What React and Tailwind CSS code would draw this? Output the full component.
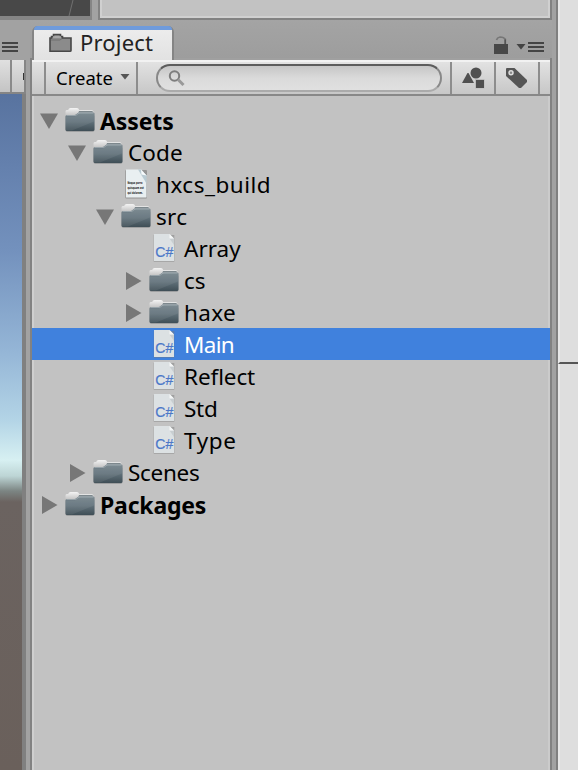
import React from "react";

function Folder() {
  return (
    <svg width="32" height="32" viewBox="0 0 32 32" className="shrink-0">
      <defs>
        <linearGradient id="fb" x1="0" y1="0" x2="0" y2="1">
          <stop offset="0" stopColor="#73828a" />
          <stop offset=".5" stopColor="#61717a" />
          <stop offset="1" stopColor="#3f4e56" />
        </linearGradient>
        <linearGradient id="ft" x1="0" y1="0" x2="0" y2="1">
          <stop offset="0" stopColor="#f4f4f4" />
          <stop offset="1" stopColor="#bcbcbc" />
        </linearGradient>
      </defs>
      <g transform="translate(0 .5)">
        <rect x="1.600" y="10" width="28.800" height="17.500" rx="2" fill="#8e9091" opacity=".7" />
        <path d="M1.500 12V7q0-1.500 1.200-1.500h1.500q.5-2 2.300-2h6.500q1.500 0 2.200 2h12.300q2 0 2 2v4z" fill="url(#ft)" />
        <path d="M15 6.500h12.500q1.500 0 1.500 1.500v2H13z" fill="#a3acb0" />
        <path d="M15 7h13.500" stroke="#7d888d" />
        <path d="M1.500 12q0-1.500 1.500-1.500h7.500q1 0 2-1l1.500-1q.6-.5 1.600-.5H29q1.500 0 1.500 1v16q0 1.500-1.500 1.500H3Q1.500 26.500 1.500 25z" fill="url(#fb)" />
        <path d="M2.500 11h8.500q1 0 2-1l1-.7q1-.8 2-.8h13.500" fill="none" stroke="#a3afb4" strokeWidth=".8" />
        <path d="M2 12h9l4-3.500h15V17L8 26H2z" fill="#fff" opacity=".07" />
      </g>
    </svg>
  );
}

function CSharp() {
  return (
    <svg width="32" height="32" viewBox="0 0 32 32" className="shrink-0">
      <rect x="5.700" y="3" width="20.600" height="26.800" fill="#777" opacity=".45" />
      <path d="M6 2h15.500l4.500 4.500V29H6z" fill="#dce1e3" />
      <path d="M21.500 6.500H26V13z" fill="#c8ced1" />
      <path d="M21.500 2v4.500H26z" fill="#f5f7f7" />
      <text x="7.300" y="25" fontSize="15" textLength="18" lengthAdjust="spacingAndGlyphs" fill="#4c78c8" stroke="#4c78c8" strokeWidth=".2" className="font-['Liberation_Sans',sans-serif]">C#</text>
    </svg>
  );
}

function TextFile() {
  return (
    <svg width="32" height="32" viewBox="0 0 32 32" className="shrink-0">
      <rect x="5.300" y="2" width="21.700" height="28.500" rx="1" fill="#777" opacity=".6" />
      <path d="M6 1.500h15l5.500 6v22H6z" fill="#e9eff1" />
      <path d="M18 1.500h3l5.500 6v8z" fill="#b9cbd3" />
      <path d="M21 1.500l5.500 6-5-1z" fill="#f8fbfc" />
      <g className="font-['DejaVu_Sans',sans-serif] font-bold" fill="#222" fontSize="3.700">
        <text transform="translate(7.5 16.3) scale(.58 1)">Neque porro</text>
        <text transform="translate(7.5 21) scale(.58 1)">quisquam est</text>
        <text transform="translate(7.5 25.7) scale(.58 1)">qui dolorem.</text>
      </g>
    </svg>
  );
}

function Arrow({ open }) {
  return (
    <svg width="18" height="20" viewBox="0 0 18 20" className="shrink-0">
      <path d={open ? "M0 3.500h18L9 19z" : "M2 2v18L17.500 11z"} fill="#777" />
    </svg>
  );
}

const icons = { folder: Folder, cs: CSharp, text: TextFile };

const rows = [
  { label: "Assets", icon: "folder", open: true, pad: "pl-[6px]", style: "font-bold text-[23px] tracking-[-0.1px]" },
  { label: "Code", icon: "folder", open: true, pad: "pl-[34px]", style: "tracking-[0.1px]" },
  { label: "hxcs_build", icon: "text", pad: "pl-[62px]", style: "tracking-[0.5px]" },
  { label: "src", icon: "folder", open: true, pad: "pl-[62px]", style: "tracking-[0.3px]" },
  { label: "Array", icon: "cs", pad: "pl-[90px]", style: "tracking-[0px]" },
  { label: "cs", icon: "folder", open: false, pad: "pl-[90px]", style: "tracking-[0px]" },
  { label: "haxe", icon: "folder", open: false, pad: "pl-[90px]", style: "tracking-[0.3px]" },
  { label: "Main", icon: "cs", pad: "pl-[92px]", style: "tracking-[-0.7px]", selected: true },
  { label: "Reflect", icon: "cs", pad: "pl-[90px]", style: "tracking-[-0.1px]" },
  { label: "Std", icon: "cs", pad: "pl-[90px]", style: "tracking-[-0.3px]" },
  { label: "Type", icon: "cs", pad: "pl-[90px]", style: "tracking-[0.6px]" },
  { label: "Scenes", icon: "folder", open: false, pad: "pl-[34px]", style: "tracking-[-0.3px]" },
  { label: "Packages", icon: "folder", open: false, pad: "pl-[6px]", style: "font-bold text-[23px] tracking-[-0.2px]" },
];

function Row({ row }) {
  const Icon = icons[row.icon];
  const bg = row.selected ? "bg-[#4081dd] text-white -mx-[2px]" : "text-black";
  return (
    <div className={`flex h-8 items-center ${row.pad} ${bg}`}>
      <div className="flex w-[24px] shrink-0 items-center">
        {row.open !== undefined && <Arrow open={row.open} />}
      </div>
      <Icon />
      <span className={`ml-[4px] whitespace-nowrap pt-[2px] leading-[30px] ${row.style}`}>{row.label}</span>
    </div>
  );
}

function Menu() {
  return (
    <div className="flex h-[10px] w-[16px] flex-col justify-between">
      <div className="h-[2px] bg-[#444]" />
      <div className="h-[2px] bg-[#444]" />
      <div className="h-[2px] bg-[#444]" />
    </div>
  );
}

export default function App() {
  return (
    <div className="flex h-[770px] w-[578px] overflow-hidden bg-[#a2a2a2] font-['Noto_Sans',sans-serif] text-[22.500px]">
      <div className="flex w-[552px] shrink-0 flex-col">
        <div className="flex h-5 shrink-0">
          <div className="w-[92px] border-r-2 border-b-[4px] border-[#858585] bg-[#484848]">
            <svg width="90" height="16"><path d="M73 0l-4 16" stroke="#707070" /></svg>
          </div>
          <div className="w-[6px] bg-[#a2a2a2]" />
          <div className="w-[454px] border-x-2 border-b-2 border-[#828282]">
            <div className="h-[18px] border-x-2 border-b-2 border-[#d0d0d0] bg-[#c2c2c2]" />
          </div>
        </div>

        <div className="flex min-h-0 flex-1">
          <div className="flex w-[26px] shrink-0 flex-col bg-[#a2a2a2]">
            <div className="flex h-[40px] shrink-0 items-start pt-[22px] pl-[2px]"><Menu /></div>
            <div className="flex h-[34px] shrink-0 border-r-2 border-b-2 border-[#858585] bg-linear-to-b from-[#e0e0e0] to-[#c4c4c4]">
              <div className="ml-[10px] w-[2px] bg-[#8a8a8a]" />
              <div className="mt-[13px] ml-[11px] h-[7px] w-[1px] bg-[#333]" />
            </div>
            <div className="flex-1 border-r-[4px] border-[#808080] bg-[linear-gradient(to_bottom,#58739f_0px,#6480ad_70px,#7391bd_156px,#94b5d6_256px,#b3d4e6_326px,#d7f0f2_366px,#bdd5d5_382px,#7c8583_397px,#6b6360_408px,#6a605b_676px)]" />
          </div>
          <div className="w-[4px] shrink-0 bg-[#a2a2a2]" />

          <div className="flex min-w-0 flex-1 flex-col">
            <div className="flex h-[38px] shrink-0 bg-linear-to-b from-[#a4a4a4] to-[#9d9d9d]">
              <div className="z-10 mt-[6px] ml-[2px] h-[34px] w-[142px] shrink-0 rounded-t-[6px] border-x-2 border-[#858585] bg-[#5b87ca]">
                <div className="flex h-full items-start rounded-t-[4px] border-t-[4px] border-[#6f9bdc] bg-linear-to-b from-[#ececec] to-[#e2e2e2] pl-[15px]">
                  <svg width="24" height="20" viewBox="0 0 24 20" className="mt-[3px]">
                    <path d="M1 18.300V5h1.500V3.500h2V1.500h7v2h2V5H22v12.500q0 .8-1 .8z" fill="#8b8b8b" stroke="#484848" strokeWidth="1.600" />
                    <path d="M4 4h8" stroke="#b0b0b0" strokeWidth="1.500" fill="none" />
                    <path d="M2 7h9l2-1.500" stroke="#707070" fill="none" />
                  </svg>
                  <span className="mt-[1px] ml-[7px] text-[22px] leading-none tracking-[0.2px] text-[#222]">Project</span>
                </div>
              </div>
              <div className="ml-[318px] flex items-start pt-[15px]">
                <svg width="18" height="20" viewBox="0 0 18 20">
                  <path d="M2 9h14v10H2z" fill="#484848" />
                  <path d="M13.200 9V4" stroke="#555" strokeWidth="1.800" />
                  <path d="M4.500 5q.7-2.500 3.500-3 4 0 5.500 2.500" fill="none" stroke="#777" strokeWidth="1.700" />
                </svg>
                <svg width="10" height="6" viewBox="0 0 10 6" className="mt-[9px] ml-[6px]"><path d="M.5 0h9L5 5.500z" fill="#444" /></svg>
                <div className="mt-[7px] ml-[2px]"><Menu /></div>
              </div>
            </div>

            <div className="flex min-h-0 flex-1 border-x-2 border-[#828282]">
              <div className="flex flex-1 flex-col bg-[#c2c2c2]">
                <div className="h-[2px] shrink-0 bg-[#a0a0a0]" />
                <div className="flex h-[36px] shrink-0 border-t-2 border-b-2 border-t-[#f2f2f2] border-b-[#888] bg-linear-to-b from-[#e2e2e2] to-[#c7c7c7]">
                  <div className="w-[14px] shrink-0 border-r-2 border-[#8d8d8d]" />
                  <div className="flex w-[92px] shrink-0 items-center border-r-2 border-[#8d8d8d] pl-[10px] text-black">
                    <span className="w-[64px] text-[18.500px] leading-none">Create</span>
                    <svg width="10" height="6" viewBox="0 0 10 6" className="mb-[3px]"><path d="M.5 0h9L5 5.500z" fill="#555" /></svg>
                  </div>
                  <div className="flex w-[314px] shrink-0 items-center border-r-2 border-[#8d8d8d] pl-[18px]">
                    <div className="flex h-[28px] w-[286px] items-center rounded-full border-2 border-t-[#5c5c5c] border-r-[#888] border-b-[#aaa] border-l-[#888] bg-linear-to-b from-[#c6c6c6] via-[#dadada] to-[#e0e0e0] pl-[10px]">
                      <svg width="18" height="18" viewBox="0 0 18 18" fill="none">
                        <circle cx="6.500" cy="7" r="4.700" stroke="#7d7d7d" strokeWidth="2" />
                        <path d="M10 10.500l5.500 5.500" stroke="#999" strokeWidth="3" />
                      </svg>
                    </div>
                  </div>
                  <div className="flex w-[44px] shrink-0 items-center border-r-2 border-[#8d8d8d] pl-[10px]">
                    <svg width="24" height="22" viewBox="0 0 24 22" fill="#505050">
                      <path d="M0 16L5.500 6h1L12 16z" />
                      <circle cx="14" cy="6" r="5.500" />
                      <path d="M13 12h9.500v9.500H13z" fill="#bbb" />
                      <path d="M14 13h8v8h-8z" />
                    </svg>
                  </div>
                  <div className="flex w-[44px] shrink-0 items-center border-r-2 border-[#8d8d8d] pl-[9px]">
                    <svg width="23" height="22" viewBox="0 0 23 22" fill="#555">
                      <path d="M1 2Q1 1 2 1h7.500L22 13v2l-6 6h-2L1 9z" />
                      <circle cx="6" cy="5.700" r="2" fill="#888" stroke="#ddd" strokeWidth="1.500" />
                    </svg>
                  </div>
                </div>
                <div className="flex flex-1 flex-col border-x-2 border-l-[#cfcfcf] border-r-[#cbcbcb] pt-[8px]">
                  {rows.map((row) => (
                    <Row key={row.label} row={row} />
                  ))}
                </div>
              </div>
            </div>
          </div>
        </div>
      </div>
      <div className="w-[4px] shrink-0 bg-[#a2a2a2]" />

      <div className="flex flex-1 flex-col border-l-2 border-[#808080]">
        <div className="h-[364px] border-b-2 border-l-2 border-b-[#555] border-l-[#e8e8e8] bg-[#dedede]" />
        <div className="flex-1 border-l-2 border-[#e8e8e8] bg-[#dedede]" />
      </div>
    </div>
  );
}
